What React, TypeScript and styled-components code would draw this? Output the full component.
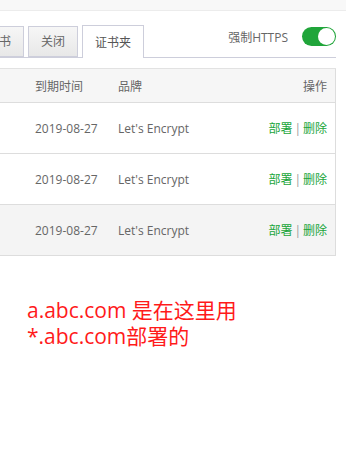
import React from "react";
import styled, { createGlobalStyle } from "styled-components";

const Global = createGlobalStyle`
  html, body { margin: 0; padding: 0; background: #fff; }
  body { font-family: "Open Sans", "Noto Sans CJK SC", sans-serif; color: #666; }
  * { box-sizing: border-box; }
`;

const TopBand = styled.div`
  height: 11px;
  background: #f8f8f8;
  border-bottom: 1px solid #ececec;
`;

const Main = styled.div`
  width: 336px;
`;

const TabBar = styled.div`
  display: flex;
  justify-content: space-between;
  align-items: flex-end;
  height: 47px;
  border-bottom: 1px solid #cdcedb;
`;

const Tabs = styled.div`
  display: flex;
  align-items: flex-end;
  gap: 4px;
  margin-left: -26px;
`;

const Tab = styled.div<{ $active?: boolean }>`
  height: ${(p) => (p.$active ? "33px" : "31px")};
  margin-bottom: ${(p) => (p.$active ? "-1px" : "0")};
  padding: ${(p) => (p.$active ? "2px 12px 0" : "0 12px")};
  border: 1px solid #cdcedb;
  border-bottom: ${(p) => (p.$active ? "none" : "1px solid #cdcedb")};
  background: ${(p) => (p.$active ? "#fff" : "linear-gradient(#f6f6f6, #e8e8e8)")};
  color: ${(p) => (p.$active ? "#555" : "#666")};
  font-size: 12px;
  display: flex;
  align-items: center;
  line-height: 1;
`;

const Https = styled.div`
  align-self: flex-start;
  margin-top: 16px;
  display: flex;
  align-items: center;
  gap: 14px;
  font-size: 12px;
  color: #666;
`;

const Switch = styled.div<{ $on: boolean }>`
  width: 34px;
  height: 19px;
  border-radius: 10px;
  background: ${(p) => (p.$on ? "#20a53a" : "#ccc")};
  display: flex;
  align-items: center;
  justify-content: ${(p) => (p.$on ? "flex-end" : "flex-start")};
  padding: 0 1px;
`;

const Knob = styled.div`
  width: 17px;
  height: 17px;
  border-radius: 50%;
  background: #fff;
`;

const Table = styled.table`
  margin-top: 10px;
  width: 336px;
  border-collapse: collapse;
  border-right: 1px solid #dddddd;
  font-size: 12px;
  color: #666;
`;

const HeadRow = styled.tr`
  height: 34px;
  background: #f6f6f6;
  border-top: 1px solid #e2e2e2;
  border-bottom: 1px solid #dddddd;
`;

const Row = styled.tr<{ $hover?: boolean }>`
  height: 51px;
  background: ${(p) => (p.$hover ? "#f4f4f4" : "#fff")};
  border-bottom: 1px solid #dddddd;
`;

const Th = styled.th<{ $w?: number; $right?: boolean }>`
  font-weight: normal;
  padding: 0;
  padding-right: ${(p) => (p.$right ? "8px" : "0")};
  text-align: ${(p) => (p.$right ? "right" : "left")};
  width: ${(p) => (p.$w ? `${p.$w}px` : "auto")};
`;

const Td = styled.td<{ $right?: boolean }>`
  padding: 0;
  padding-right: ${(p) => (p.$right ? "8px" : "0")};
  text-align: ${(p) => (p.$right ? "right" : "left")};
`;

const Action = styled.span`
  color: #20a53a;
`;

const Sep = styled.span`
  color: #999;
  margin: 0 2px;
`;

const Note = styled.div`
  margin: 41px 0 0 27px;
  color: #ff1a1a;
  font-size: 21px;
  line-height: 26px;
`;

const rows = [false, false, true];

export default function App() {
  return (
    <>
      <Global />
      <TopBand />
      <Main>
        <TabBar>
          <Tabs>
            <Tab>证书</Tab>
            <Tab>关闭</Tab>
            <Tab $active>证书夹</Tab>
          </Tabs>
          <Https>
            <span>强制HTTPS</span>
            <Switch $on>
              <Knob />
            </Switch>
          </Https>
        </TabBar>
        <Table>
          <thead>
            <HeadRow>
              <Th $w={35}></Th>
              <Th $w={83}>到期时间</Th>
              <Th>品牌</Th>
              <Th $right>操作</Th>
            </HeadRow>
          </thead>
          <tbody>
            {rows.map((h, i) => (
              <Row key={i} $hover={h}>
                <Td></Td>
                <Td>2019-08-27</Td>
                <Td>Let's Encrypt</Td>
                <Td $right>
                  <Action>部署</Action>
                  <Sep>|</Sep>
                  <Action>删除</Action>
                </Td>
              </Row>
            ))}
          </tbody>
        </Table>
      </Main>
      <Note>
        a.abc.com 是在这里用
        <br />
        *.abc.com部署的
      </Note>
    </>
  );
}
